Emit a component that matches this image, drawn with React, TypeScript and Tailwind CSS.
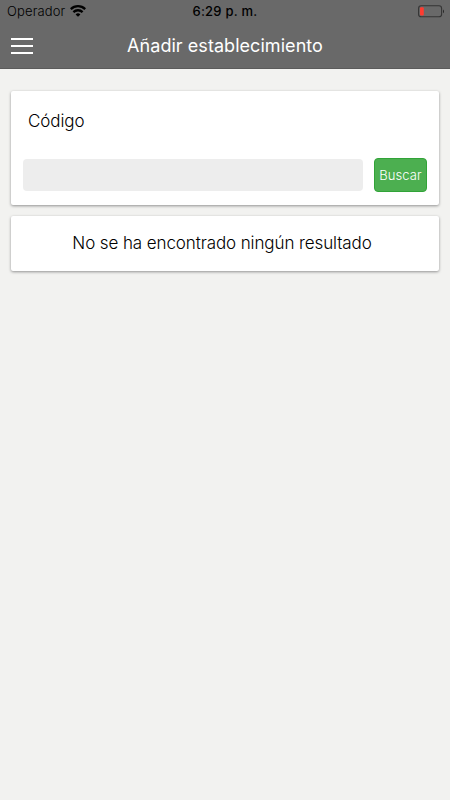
import type { ReactNode } from "react";

function WifiIcon() {
  return (
    <svg width="16" height="12" viewBox="0 0 16 12" fill="none" stroke="#000" strokeWidth="2.3">
      <path d="M0.8 4.1a10.3 10.3 0 0 1 14.4 0" />
      <path d="M3.4 7.1a6.6 6.6 0 0 1 9.2 0" />
      <path d="M8 11.8 5.6 9.4a3.4 3.4 0 0 1 4.8 0Z" fill="#000" stroke="none" />
    </svg>
  );
}

function BatteryIcon() {
  return (
    <svg width="27" height="13" viewBox="0 0 27 13" fill="none">
      <rect x="0.6" y="0.8" width="23" height="11" rx="2.6" stroke="#353535" strokeWidth="1.1" />
      <rect x="2" y="2.2" width="3.8" height="8.2" rx="1" fill="#ff3b30" />
      <path d="M25 4.5v3.8c1.3-.6 1.3-3.2 0-3.8Z" fill="#252525" />
    </svg>
  );
}

function Card({ children, className }: { children: ReactNode; className: string }) {
  return (
    <section className={`rounded-[2px] bg-white shadow-[0_1px_3px_rgba(0,0,0,0.4)] ${className}`}>
      {children}
    </section>
  );
}

export default function App() {
  return (
    <div className="min-h-screen bg-[#f2f2f0] font-['Inter',sans-serif] text-black">
      <header className="h-[69px] border-b border-[#5b5b5b] bg-[#696969]">
        <div className="grid h-[23px] grid-cols-3 items-center pr-[5px] pl-[7px] text-[13px]">
          <div className="flex items-center gap-[5px] pb-px">
            <span className="pt-px font-light tracking-[0.15px]">Operador</span>
            <WifiIcon />
          </div>
          <span className="pr-[2px] text-center font-medium tracking-[0.25px] whitespace-nowrap">6:29 p. m.</span>
          <div className="flex justify-end">
            <BatteryIcon />
          </div>
        </div>
        <div className="grid h-[45px] grid-cols-[1fr_auto_1fr] items-center px-[11px]">
          <button type="button" aria-label="Menú" className="flex w-[22px] flex-col gap-[5px]">
            <span className="h-[2px] bg-white" />
            <span className="h-[2px] bg-white" />
            <span className="h-[2px] bg-white" />
          </button>
          <h1 className="text-[18px] font-normal tracking-[0.05px] text-white">Añadir establecimiento</h1>
        </div>
      </header>

      <main className="flex flex-col gap-[11px] px-[11px] pt-[22px]">
        <Card className="h-[114px] px-3 pt-[17px]">
          <label htmlFor="codigo" className="block pl-[5px] text-[17px] leading-[26px] font-light tracking-[-0.1px]">
            Código
          </label>
          <div className="mt-[24px] flex items-center justify-between">
            <input id="codigo" type="text" className="h-8 w-[340px] rounded-[4px] bg-[#ededed] px-2 outline-none" />
            <button
              type="button"
              className="h-[34px] w-[53px] rounded-[4px] border border-[#31a438] bg-[#4caf50] pt-[2px] text-[13px] font-light tracking-[0.1px] text-white"
            >
              Buscar
            </button>
          </div>
        </Card>
        <Card className="flex h-[55px] items-center justify-center">
          <p className="pt-px pr-[6px] text-[17px] font-light tracking-[-0.1px]">No se ha encontrado ningún resultado</p>
        </Card>
      </main>
    </div>
  );
}
